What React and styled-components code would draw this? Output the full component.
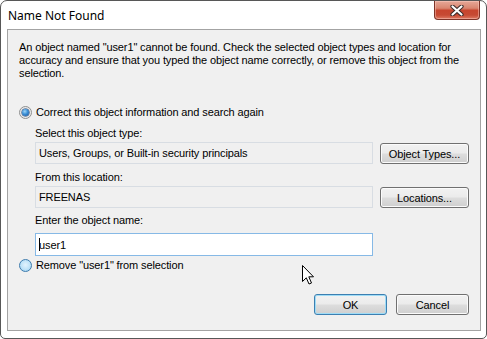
import React from "react";
import styled, { createGlobalStyle, css } from "styled-components";

const Global = createGlobalStyle`
  html, body { margin: 0; padding: 0; background: #ffffff; }
  body { font-family: "Liberation Sans", Arial, sans-serif; font-size: 11px; letter-spacing: -0.12px; color: #000; }
  * { box-sizing: border-box; }
`;

const Window = styled.div`
  position: relative;
  width: 487px;
  height: 339px;
  display: flex;
  flex-direction: column;
  border: 1px solid #575757;
  border-radius: 7px 7px 5px 5px;
  background: #ffffff;
  padding: 0 5px 7px 6px;
`;

const TitleBar = styled.div`
  height: 28px;
  display: flex;
  align-items: flex-start;
  justify-content: space-between;
`;

const Title = styled.div`
  font-family: "Noto Sans", "Open Sans", sans-serif;
  font-size: 12px;
  letter-spacing: 0;
  line-height: 16px;
  padding: 7px 0 0 1px;
  color: #000;
`;

const CloseButton = styled.div`
  width: 46px;
  height: 19px;
  margin-right: 1px;
  border: 1px solid #7d3428;
  border-top: none;
  border-radius: 0 0 4px 4px;
  background: linear-gradient(#e6a898 0%, #d98670 40%, #c7452e 52%, #c64a33 78%, #de7a63 100%);
  box-shadow: inset 0 0 0 1px rgba(255, 210, 200, 0.45);
  display: flex;
  align-items: center;
  justify-content: center;
`;

const Client = styled.div`
  flex: 1;
  display: flex;
  flex-direction: column;
  background: #f0f0f0;
  border: 1px solid #a3a3a3;
  padding: 11px 11px 15px 11px;
`;

const Message = styled.p`
  margin: 0;
  line-height: 13px;
  white-space: nowrap;
`;

const RadioRow = styled.label`
  display: flex;
  align-items: center;
  gap: 4px;
  height: 13px;
  line-height: 13px;
  margin-top: ${(p) => p.$mt}px;
`;

const Radio = styled.span`
  position: relative;
  flex: none;
  width: 13px;
  height: 13px;
  border-radius: 50%;
  border: 1px solid ${(p) => (p.$hot ? "#3d7bad" : "#8e8f8f")};
  background: ${(p) =>
    p.$hot
      ? "radial-gradient(circle at 50% 45%, #e3f3fd 0%, #bfe3f8 55%, #8fcaee 100%)"
      : "radial-gradient(circle at 50% 50%, #d8d8d8 0%, #e6e6e6 55%, #fbfbfb 100%)"};
  display: flex;
  align-items: center;
  justify-content: center;
  ${(p) =>
    p.$checked &&
    css`
      &::after {
        content: "";
        width: 7px;
        height: 7px;
        border-radius: 50%;
        background: radial-gradient(circle at 40% 35%, #9fd6f7 0%, #3b8fd6 45%, #124a92 100%);
        box-shadow: 0 0 0 0.5px #1b3f73;
      }
    `}
`;

const Indent = styled.div`
  margin-left: 16px;
  display: flex;
  flex-direction: column;
`;

const FieldLabel = styled.div`
  line-height: 13px;
  height: 13px;
  margin-top: ${(p) => p.$mt}px;
`;

const FieldRow = styled.div`
  display: flex;
  align-items: flex-start;
  gap: 7px;
  margin-top: 2px;
`;

const ReadOnlyField = styled.div`
  width: 338px;
  height: 22px;
  border: 1px solid #d8dde3;
  background: #f0f0f0;
  padding: 0 3px;
  display: flex;
  align-items: center;
`;

const NameInput = styled.div`
  width: 338px;
  height: 23px;
  margin-top: 6px;
  border: 1px solid #86b9e6;
  background: #ffffff;
  padding: 0 3px;
  display: flex;
  align-items: center;
`;

const Caret = styled.span`
  display: inline-block;
  width: 0;
  height: 13px;
  border-left: 1px solid #000;
  margin-right: -1px;
`;

const Button = styled.button`
  width: ${(p) => p.$w || 73}px;
  height: 21px;
  margin: ${(p) => (p.$inRow ? "1px 0 0" : "0")};
  padding: 0;
  font-family: "Liberation Sans", Arial, sans-serif;
  font-size: 11px;
  letter-spacing: -0.12px;
  color: #000;
  border: 1px solid ${(p) => (p.$default ? "#3c7fb1" : "#707070")};
  border-radius: 3px;
  background: linear-gradient(#f2f2f2 0%, #ebebeb 48%, #dddddd 52%, #cfcfcf 100%);
  box-shadow: inset 0 0 0 1px ${(p) => (p.$default ? "#9fdcf6" : "#fbfbfb")};
`;

const ButtonRow = styled.div`
  margin-top: auto;
  display: flex;
  justify-content: flex-end;
  gap: 9px;
`;

const Cursor = styled.svg`
  position: absolute;
  left: 301px;
  top: 264px;
`;

export default function App() {
  return (
    <>
      <Global />
      <Window>
        <TitleBar>
          <Title>Name Not Found</Title>
          <CloseButton>
            <svg width="14" height="11" viewBox="0 0 14 11">
              <path d="M2.5 1.5 L11.5 9.5 M11.5 1.5 L2.5 9.5" stroke="#3a2a28" strokeWidth="4.2" strokeLinecap="round" />
              <path d="M2.5 1.5 L11.5 9.5 M11.5 1.5 L2.5 9.5" stroke="#ffffff" strokeWidth="2.2" strokeLinecap="round" />
            </svg>
          </CloseButton>
        </TitleBar>
        <Client>
          <Message>
            An object named "user1" cannot be found. Check the selected object types and location for
            <br />
            accuracy and ensure that you typed the object name correctly, or remove this object from the
            <br />
            selection.
          </Message>
          <RadioRow $mt={26}>
            <Radio $checked />
            <span>Correct this object information and search again</span>
          </RadioRow>
          <Indent>
            <FieldLabel $mt={8}>Select this object type:</FieldLabel>
            <FieldRow>
              <ReadOnlyField>Users, Groups, or Built-in security principals</ReadOnlyField>
              <Button $w={89} $inRow>Object Types...</Button>
            </FieldRow>
            <FieldLabel $mt={7}>From this location:</FieldLabel>
            <FieldRow>
              <ReadOnlyField>FREENAS</ReadOnlyField>
              <Button $w={89} $inRow>Locations...</Button>
            </FieldRow>
            <FieldLabel $mt={6}>Enter the object name:</FieldLabel>
            <NameInput>
              <Caret />
              user1
            </NameInput>
          </Indent>
          <RadioRow $mt={3}>
            <Radio $hot />
            <span>Remove "user1" from selection</span>
          </RadioRow>
          <ButtonRow>
            <Button $default>OK</Button>
            <Button>Cancel</Button>
          </ButtonRow>
        </Client>
        <Cursor width="13" height="21" viewBox="0 0 13 21">
          <path d="M0.5 0.5 L0.5 16.5 L4.3 12.8 L7 19 L9.5 18 L6.8 11.8 L11.5 11.8 Z" fill="#ffffff" stroke="#000000" strokeWidth="1" strokeLinejoin="miter" />
        </Cursor>
      </Window>
    </>
  );
}
